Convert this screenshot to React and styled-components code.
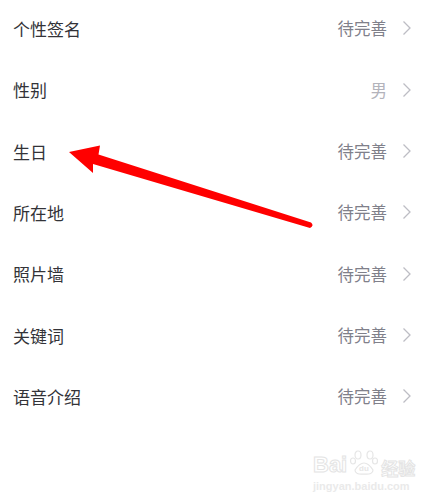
import React from 'react'
import styled, { createGlobalStyle } from 'styled-components'

const GlobalStyle = createGlobalStyle`
  html, body {
    margin: 0;
    padding: 0;
    background: #ffffff;
  }
  body {
    font-family: "Noto Sans CJK SC", "Noto Sans", sans-serif;
    width: 430px;
    height: 500px;
    overflow: hidden;
  }
`

const rows = [
  { label: '个性签名', value: '待完善' },
  { label: '性别', value: '男', filled: true },
  { label: '生日', value: '待完善' },
  { label: '所在地', value: '待完善' },
  { label: '照片墙', value: '待完善' },
  { label: '关键词', value: '待完善' },
  { label: '语音介绍', value: '待完善' },
]

export default function App() {
  return (
    <Page>
      <GlobalStyle />
      <List>
        {rows.map((r) => (
          <Row key={r.label}>
            <Label>{r.label}</Label>
            <Right>
              <Value $filled={r.filled}>{r.value}</Value>
              <Chevron />
            </Right>
          </Row>
        ))}
      </List>
      <Arrow />
      <Watermark>
        <div className="top">
          <span className="bai">Bai</span>
          <Paw />
          <span className="jy">经验</span>
        </div>
        <div className="url">jingyan.baidu.com</div>
      </Watermark>
    </Page>
  )
}

function Chevron() {
  return (
    <ChevronSvg viewBox="0 0 10 16" width="10" height="16">
      <path d="M1.5 1.5 L8 8 L1.5 14.5" fill="none" stroke="#bdbdc4" strokeWidth="1.3" />
    </ChevronSvg>
  )
}

function Arrow() {
  return (
    <ArrowSvg viewBox="0 0 430 500" width="430" height="500">
      <path
        d="M69 152 L100 145.5 L98.5 154.5 L311 222.5 Q314.5 225.5 310 228 L93 164 L93 173 Z"
        fill="#ff0000"
      />
    </ArrowSvg>
  )
}

function Paw() {
  return (
    <svg viewBox="0 0 30 28" width="30" height="28" style={{ margin: '0 2px' }}>
      <g fill="none" stroke="#e6e6e6" strokeWidth="1.2">
        <ellipse cx="9" cy="7" rx="3" ry="4" />
        <ellipse cx="21" cy="7" rx="3" ry="4" />
        <ellipse cx="4" cy="13" rx="2.5" ry="3" />
        <ellipse cx="26" cy="13" rx="2.5" ry="3" />
        <path d="M6 22 Q15 8 24 22 Q24 27 15 26 Q6 27 6 22 Z" />
      </g>
      <text x="15" y="23" fontSize="8" textAnchor="middle" fill="#e6e6e6" fontFamily="Liberation Sans, sans-serif" fontWeight="bold">du</text>
    </svg>
  )
}

const Page = styled.div`
  position: relative;
  width: 430px;
  height: 500px;
  overflow: hidden;
`

const List = styled.div`
  display: flex;
  flex-direction: column;
  margin-top: -2.2px;
`

const Row = styled.div`
  height: 61.33px;
  display: flex;
  align-items: center;
  justify-content: space-between;
  padding: 0 18px 0 13px;
`

const Label = styled.span`
  font-size: 17px;
  color: #333338;
`

const Right = styled.div`
  display: flex;
  align-items: center;
  gap: 15px;
`

const Value = styled.span`
  font-size: 16.5px;
  color: ${(p) => (p.$filled ? '#b3b3bb' : '#80808a')};
`

const ChevronSvg = styled.svg`
  display: block;
`

const ArrowSvg = styled.svg`
  position: absolute;
  left: 0;
  top: 0;
  pointer-events: none;
`

const Watermark = styled.div`
  position: absolute;
  left: 313px;
  top: 448px;
  font-family: "Liberation Sans", sans-serif;
  .top {
    display: flex;
    align-items: flex-end;
    height: 28px;
  }
  .bai {
    font-size: 22px;
    font-weight: bold;
    line-height: 1;
    color: #fff;
    -webkit-text-stroke: 1px #e4e4e4;
  }
  .jy {
    font-family: "Noto Sans CJK SC", sans-serif;
    font-size: 17px;
    line-height: 1;
    font-weight: bold;
    color: #fff;
    -webkit-text-stroke: 1px #e4e4e4;
  }
  .url {
    font-size: 11px;
    margin-top: 4px;
    color: #eaeaea;
    font-weight: bold;
  }
`
